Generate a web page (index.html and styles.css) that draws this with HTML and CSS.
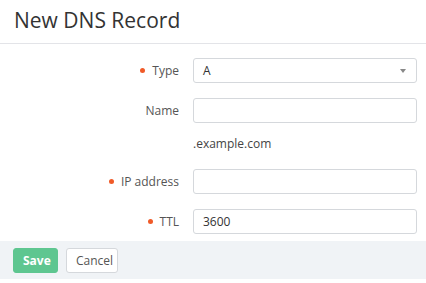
FILE: index.html
```html
<!DOCTYPE html>
<html>
<head>
<meta charset="utf-8">
<link rel="stylesheet" href="styles.css">
</head>
<body>
<div class="page">
  <div class="header"><h1 class="title">New DNS Record</h1></div>
  <div class="form">
    <div class="row">
      <label class="label req">Type</label>
      <div class="select"><span>A</span><span class="caret"></span></div>
    </div>
    <div class="row">
      <label class="label">Name</label>
      <div class="input"></div>
    </div>
    <div class="row hint-row">
      <span class="label"></span>
      <span class="hint">.example.com</span>
    </div>
    <div class="row">
      <label class="label req">IP address</label>
      <div class="input"></div>
    </div>
    <div class="row">
      <label class="label req">TTL</label>
      <div class="input">3600</div>
    </div>
  </div>
  <div class="footer">
    <button class="btn btn-save">Save</button>
    <button class="btn btn-cancel">Cancel</button>
  </div>
</div>
</body>
</html>
```

FILE: styles.css
```css
* { box-sizing: border-box; }
html, body { margin: 0; padding: 0; background: #fff; }
body { font-family: "Open Sans", sans-serif; color: #333; width: 426px; height: 283px; overflow: hidden; }
.header { height: 44px; border-bottom: 1px solid #e3e4e8; padding: 0 14px; display: flex; align-items: center; }
.title { margin: 0; font-weight: 400; font-size: 21px; color: #333; letter-spacing: 0; position: relative; top: -2px; }
.form { padding: 14px 9px 0 0; display: flex; flex-direction: column; gap: 15px; }
.row { display: flex; align-items: center; gap: 14px; }
.label { width: 179px; flex: none; text-align: right; font-size: 12px; color: #555; position: relative; }
.label.req::before { content: ""; display: inline-block; width: 5px; height: 5px; border-radius: 50%; background: #f05a28; margin-right: 7px; vertical-align: middle; position: relative; top: -1px; }
.select, .input { flex: 1; height: 25px; border: 1px solid #d5d8dc; border-radius: 3px; font-size: 12px; color: #333; padding: 0 9px; display: flex; align-items: center; }
.select { justify-content: space-between; padding-right: 6px; }
.caret { width: 0; height: 0; border-left: 3px solid transparent; border-right: 3px solid transparent; border-top: 4px solid #888; margin-right: 4px; }
.hint-row { margin: -3px 0 2px; }
.hint { font-size: 12px; color: #444; }
.footer { margin-top: 7px; height: 38px; background: #f0f3f6; display: flex; align-items: center; padding: 0 13px; gap: 8px; }
.btn { font-family: "Open Sans", sans-serif; font-size: 12px; height: 25px; border-radius: 3px; padding: 0 9px; cursor: pointer; }
.btn-save { background: #5ec690; color: #fff; font-weight: 700; border: 1px solid #5ec690; width: 45px; }
.btn-cancel { background: #fff; color: #555; border: 1px solid #d5d8dc; width: 52px; }
```
